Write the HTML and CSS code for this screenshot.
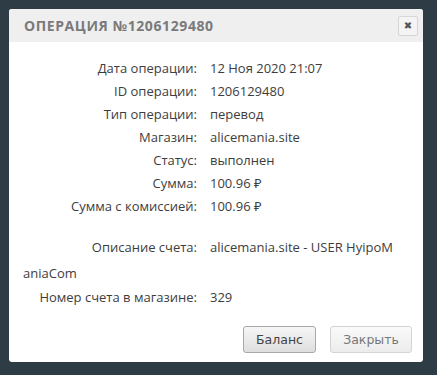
FILE: index.html
```html
<!DOCTYPE html>
<html>
<head>
 <meta charset="UTF-8">
 <title>Операция</title>
 <link rel="stylesheet" href="styles.css">
</head>
<body>
<div class="dialog">
  <div class="head">
    <span class="title">Операция №1206129480</span>
    <a class="close">&#10006;</a>
  </div>
  <div class="info">
    <div class="row"><span class="lbl">Дата операции:</span><span class="val">12 Ноя 2020 21:07</span></div>
    <div class="row"><span class="lbl">ID операции:</span><span class="val">1206129480</span></div>
    <div class="row"><span class="lbl">Тип операции:</span><span class="val">перевод</span></div>
    <div class="row"><span class="lbl">Магазин:</span><span class="val">alicemania.site</span></div>
    <div class="row"><span class="lbl">Статус:</span><span class="val">выполнен</span></div>
    <div class="row"><span class="lbl">Сумма:</span><span class="val">100.96 &#8381;</span></div>
    <div class="row"><span class="lbl">Сумма с комиссией:</span><span class="val">100.96 &#8381;</span></div>
    <div class="row desc"><span class="lbl">Описание счета:</span><span class="val">alicemania.site - USER HyipoManiaCom</span></div>
    <div class="row"><span class="lbl">Номер счета в магазине:</span><span class="val">329</span></div>
  </div>
  <div class="buttons">
    <button class="btn">Баланс</button>
    <button class="btn light">Закрыть</button>
  </div>
</div>
</body>
</html>
```
FILE: styles.css
```css
body {
  margin: 0;
  padding: 9px;
  background: #2e3c46;
  font-family: "Open Sans", "Noto Sans", sans-serif;
}
.dialog {
  width: 414px;
  background: #fff;
  border-radius: 3px;
  overflow: hidden;
}
.head {
  height: 33px;
  background: #efefef;
  display: flex;
  align-items: center;
  justify-content: space-between;
  padding: 0 5px 0 15px;
}
.title {
  text-transform: uppercase;
  font-weight: bold;
  font-size: 14px;
  letter-spacing: 0.6px;
  color: #7a7a7a;
}
.close {
  width: 18px;
  height: 18px;
  border: 1px solid #d6d6d6;
  border-radius: 2px;
  background: #f4f4f4;
  color: #555;
  font-size: 10px;
  font-weight: bold;
  line-height: 18px;
  text-align: center;
  font-family: "DejaVu Sans", sans-serif;
}
.info {
  padding: 15px 23px 0 14px;
  font-size: 13px;
  color: #3d3d3d;
}
.row {
  line-height: 23px;
}
.lbl {
  display: inline-block;
  width: 174px;
  margin-right: 13px;
  text-align: right;
}
.desc {
  margin-top: 16px;
  line-height: 26px;
  word-break: break-all;
}
.buttons {
  display: flex;
  justify-content: flex-end;
  gap: 14px;
  padding: 17px 11px 9px 0;
}
.btn {
  width: 73px;
  height: 27px;
  padding: 0;
  border: 1px solid #a9a9a9;
  border-radius: 3px;
  background: linear-gradient(#f6f6f6, #dedede);
  font-family: "DejaVu Sans", sans-serif;
  font-size: 12.5px;
  color: #444;
}
.btn.light {
  width: 82px;
  border-color: #d4d4d4;
  background: linear-gradient(#fafafa, #ececec);
  color: #777;
}
```
